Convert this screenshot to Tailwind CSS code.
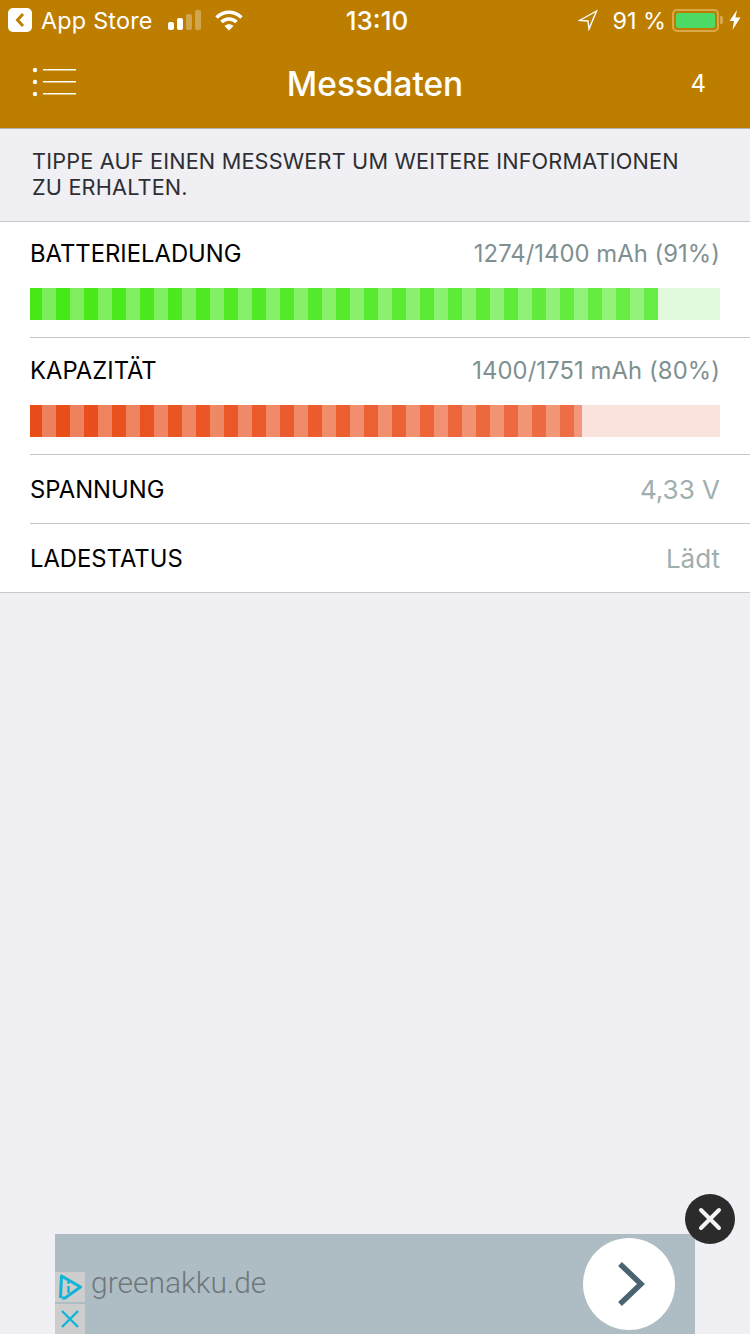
<!DOCTYPE html>
<html lang="de">
<head>
  <meta charset="UTF-8" />
  <meta name="viewport" content="width=device-width, initial-scale=1.0"/>
  <title>Messdaten</title>
  <script src="https://cdn.jsdelivr.net/npm/@tailwindcss/browser@4"></script>
</head>
<body class="relative w-[750px] h-[1334px] overflow-hidden bg-[#efeff4] font-['Inter','Liberation_Sans',sans-serif] text-black">

  <!-- status bar + nav -->
  <header class="h-[129px] bg-[#bd7e00] border-b border-[#b2b2b2] text-white">
    <div class="h-10 flex items-center pl-2 pr-[9px]">
      <div class="w-6 h-6 bg-white rounded-[5px] flex items-center justify-center">
        <svg width="12" height="16" viewBox="0 0 12 16"><path d="M9 2 L3.5 8 L9 14" fill="none" stroke="#bd7e00" stroke-width="3"/></svg>
      </div>
      <span class="ml-[9px] mt-[2px] text-[23.4px] leading-none tracking-[0.2px]">App Store</span>
      <div class="ml-[15px] flex items-end gap-[3px] h-[20px]">
        <span class="w-[6px] h-[8px] rounded-[2px] bg-white"></span>
        <span class="w-[6px] h-[12px] rounded-[2px] bg-white"></span>
        <span class="w-[6px] h-[16px] rounded-[2px] bg-white/30"></span>
        <span class="w-[6px] h-[20px] rounded-[2px] bg-white/30"></span>
      </div>
      <svg class="ml-[14px]" width="28" height="21" viewBox="0 0 28 21" fill="none" stroke="#fff" stroke-width="3.4">
        <path d="M1.5 7.5 C8.5 0.5 19.5 0.5 26.5 7.5"/>
        <path d="M6.5 12 C10.5 8 17.5 8 21.5 12"/>
        <path d="M14 20.5 L9.5 16 C12 13.8 16 13.8 18.5 16 Z" fill="#fff" stroke="none"/>
      </svg>
      <span class="absolute left-0 right-0 mt-[2px] pl-[4px] text-center text-[26px] leading-none font-medium">13:10</span>
      <svg class="ml-auto" width="20" height="22" viewBox="0 0 20 22" fill="none" stroke="#fff" stroke-width="1.4" stroke-linejoin="miter">
        <path d="M1.5 11.5 L18.5 2 L11 20 L10 12 Z"/>
      </svg>
      <span class="ml-[14px] mt-[2px] text-[23.4px] leading-none">91 %</span>
      <div class="ml-[6px] w-[47px] h-[23px] rounded-[5px] border-2 border-[#d9a84a] p-[2px]">
        <div class="w-[39px] h-full rounded-[2px] bg-[#4cd964]"></div>
      </div>
      <span class="ml-px w-[3px] h-[8px] rounded-r-[2px] bg-[#d9a84a]"></span>
      <svg class="ml-[6px]" width="12" height="20" viewBox="0 0 12 20"><path d="M8 0 L0.5 11 L5 11 L3.5 20 L11.5 7.5 L6.5 7.5 Z" fill="#fff"/></svg>
    </div>
    <div class="relative h-[88px] flex items-center justify-center">
      <svg class="absolute left-[32px] top-[27px]" width="44" height="30" viewBox="0 0 44 30" fill="#fff">
        <circle cx="3" cy="3" r="2.2"/><circle cx="3" cy="15" r="2.2"/><circle cx="3" cy="27" r="2.2"/>
        <rect x="11" y="2" width="33" height="1.5"/><rect x="11" y="14" width="33" height="1.5"/><rect x="11" y="26" width="33" height="1.5"/>
      </svg>
      <h1 class="mt-[2px] text-[33.4px] leading-none font-medium">Messdaten</h1>
      <span class="absolute right-[44px] top-[32px] text-[24px] leading-none">4</span>
    </div>
  </header>

  <p class="h-[93px] pt-[19px] pl-[32px] pr-[50px] text-[21.7px] leading-[26px] tracking-[0.17px] text-[#2e2e33] border-b border-[#c8c7cc]">TIPPE AUF EINEN MESSWERT UM WEITERE INFORMATIONEN ZU ERHALTEN.</p>

  <section class="bg-white border-b border-[#c8c7cc]">
    <div class="pl-[30px]">
      <div class="h-[116px] border-b border-[#c8c7cc] pr-[30px] pt-[18px]">
        <div class="flex justify-between items-center h-7 text-[23.8px]">
          <span>BATTERIELADUNG</span>
          <span class="text-[#7f9090] tracking-[0.05px]">1274/1400 mAh (91%)</span>
        </div>
        <div id="bar-charge" class="mt-[20px] h-8 flex bg-[#e1fade]"></div>
      </div>
      <div class="h-[117px] border-b border-[#c8c7cc] pr-[30px] pt-[19px]">
        <div class="flex justify-between items-center h-7 text-[23.8px]">
          <span>KAPAZITÄT</span>
          <span class="text-[#7f9090] tracking-[0.1px]">1400/1751 mAh (80%)</span>
        </div>
        <div id="bar-capacity" class="mt-[20px] h-8 flex bg-[#fae3dc]"></div>
      </div>
      <div class="h-[69px] border-b border-[#c8c7cc] pr-[30px] flex justify-between items-center text-[23.8px]">
        <span class="mt-[2px]">SPANNUNG</span>
        <span class="text-[#a0aeae] text-[26px]">4,33 V</span>
      </div>
      <div class="h-[68px] pr-[30px] flex justify-between items-center text-[23.8px]">
        <span class="mt-[2px]">LADESTATUS</span>
        <span class="text-[#a0aeae] text-[26px]">Lädt</span>
      </div>
    </div>
  </section>

  <!-- ad banner lies over the page -->
  <div class="absolute left-[55px] top-[1234px] w-[640px] h-[100px] bg-[#aebdc4]">
    <div class="absolute left-0 top-[38px] w-[30px] h-[30px] bg-[#cdcdcd] flex items-center justify-center">
      <svg width="26" height="28" viewBox="0 0 26 28" fill="none" stroke="#0fb4d8" stroke-width="3" stroke-linejoin="round">
        <path d="M5 25 L8 25 L23.5 14 L4.5 3 L3.5 25"/>
        <path d="M11.5 13 V20" stroke-width="2.4"/>
        <circle cx="11.5" cy="9.5" r="0.6" stroke-width="1.6"/>
      </svg>
    </div>
    <div class="absolute left-0 top-[70px] w-[30px] h-[30px] bg-[#cdcdcd] flex items-center justify-center">
      <svg width="20" height="20" viewBox="0 0 20 20" stroke="#0fb4d8" stroke-width="2.4"><path d="M2 2 L18 18 M18 2 L2 18"/></svg>
    </div>
    <span class="absolute left-[36px] top-[30px] font-['Roboto',sans-serif] font-light text-[#6f777b] text-[30px] leading-[38px]">greenakku.de</span>
    <div class="absolute left-[528px] top-[4px] w-[92px] h-[92px] rounded-full bg-white flex items-center justify-center">
      <svg class="ml-[6px]" width="30" height="46" viewBox="0 0 30 46" fill="none" stroke="#4a6572" stroke-width="5.5"><path d="M3 3 L24 23 L3 43"/></svg>
    </div>
  </div>
  <button class="absolute left-[685px] top-[1194px] w-[50px] h-[50px] rounded-full bg-[#2b2b2b] flex items-center justify-center">
    <svg width="24" height="24" viewBox="0 0 24 24" stroke="#f4f4f4" stroke-width="4" stroke-linecap="round"><path d="M3 3 L21 21 M21 3 L3 21"/></svg>
  </button>

  <script>
    // segments alternate and fade towards the right
    function mix(a, b, t) {
      return 'rgb(' + a.map((v, i) => Math.round(v + (b[i] - v) * t)).join(',') + ')';
    }
    function fillBar(id, total, dark0, dark1, light0, light1) {
      const bar = document.getElementById(id);
      let used = 0, i = 0;
      while (used < total) {
        const w = Math.min(i === 0 ? 12 : 14, total - used);
        const t = used / 628;
        const seg = document.createElement('div');
        seg.style.width = w + 'px';
        seg.style.background = i % 2 === 0 ? mix(dark0, dark1, t) : mix(light0, light1, t);
        bar.appendChild(seg);
        used += w;
        i++;
      }
    }
    fillBar('bar-charge', 628, [69, 232, 21], [104, 236, 70], [124, 238, 92], [149, 242, 124]);
    fillBar('bar-capacity', 552, [232, 76, 24], [238, 115, 76], [238, 128, 92], [243, 155, 125]);
  </script>
</body>
</html>
